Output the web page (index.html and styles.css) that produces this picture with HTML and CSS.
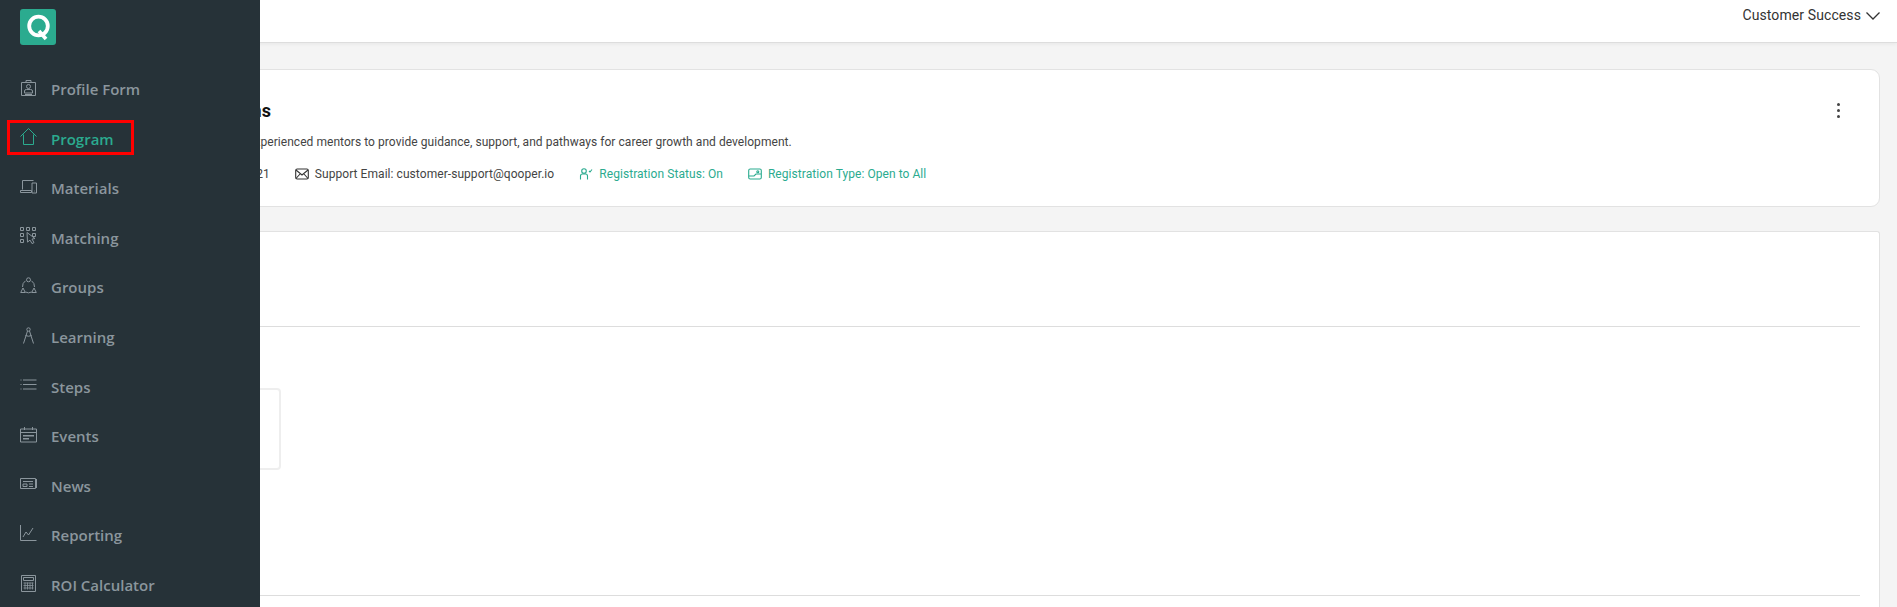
FILE: index.html
```html
<!DOCTYPE html>
<html lang="en">
<head>
<meta charset="utf-8">
<title>Program</title>
<link rel="stylesheet" href="styles.css">
</head>
<body>
<aside class="sidebar">
  <div class="logo"><svg viewBox="0 0 36 36" width="36" height="36"><circle cx="18.500" cy="17" r="9.300" fill="none" stroke="#fff" stroke-width="3.800"/><path d="M19 22l7 8" stroke="#fff" stroke-width="3.600" fill="none"/></svg></div>
  <nav class="nav">
    <a class="item"><svg class="ic" viewBox="0 0 17 17"><path d="M1.500 3.500h14v13h-14zM6 3.500V1.500h5v2"/><circle cx="8.500" cy="7.500" r="2"/><path d="M4.500 14v-2q0-1.500 2-1.500h4q2 0 2 1.500v2zM5 15.500h7"/></svg><span>Profile Form</span></a>
    <a class="item active"><svg class="ic" viewBox="0 0 17 17"><path d="M.5 8.500L8.500.5l8 8M3.500 6.500v10h10v-10"/></svg><span>Program</span><i class="mark"></i></a>
    <a class="item"><svg class="ic" viewBox="0 0 17 17"><path d="M2.500 11.500v-9h11M.5 12.500h11v2h-11zM12 5h4.500v10H12zM14 13h.6"/></svg><span>Materials</span></a>
    <a class="item"><svg class="ic" viewBox="0 0 17 17"><path d="M.5.5h3v3h-3zM6.500.5h3v3h-3zM12.500.5h3v3h-3zM.5 6.500h3v3h-3zM12.500 6.500h3v3h-3zM.5 12.500h3v3h-3z"/><path d="M7 5.500l8 6-3 .6 2 3.500-2 1-2-3.500-2.500 2z"/></svg><span>Matching</span></a>
    <a class="item"><svg class="ic" viewBox="0 0 17 17"><circle cx="8.500" cy="2.800" r="2"/><path d="M.7 15.500l2.300-4.500 2.300 4.500zM11.700 15.500l2.300-4.500 2.300 4.500zM5.500 3.800A7 7 0 0 0 2.500 10M11.500 3.800a7 7 0 0 1 3 6.200M5.500 15a6 6 0 0 0 6 0"/></svg><span>Groups</span></a>
    <a class="item"><svg class="ic" viewBox="0 0 17 17"><circle cx="8.500" cy="2.500" r="1.700"/><path d="M7.500 4L3.500 16.500M9.500 4l4 12.500M5.500 8.500q3 1.500 6 0"/></svg><span>Learning</span></a>
    <a class="item"><svg class="ic" viewBox="0 0 17 12"><path d="M3 1.500h13.500M3 6h13.500M3 10.500h13.500M.5 1.500h1M.5 6h1M.5 10.500h1"/></svg><span>Steps</span></a>
    <a class="item"><svg class="ic" viewBox="0 0 17 16"><path d="M.5 2.500h16v13H.5zM.5 6h16M4.500.5v3M12.500.5v3"/><path class="bar" d="M3 8.500h11v1.500H3zM3 11.500h6V13H3z"/></svg><span>Events</span></a>
    <a class="item"><svg class="ic" viewBox="0 0 17 11"><path d="M.5.5h15v10H.5zM16.500 1v9M3 3.500h10M3 6h4v2.500H3zM9 6h4M9 8.500h4"/></svg><span>News</span></a>
    <a class="item"><svg class="ic" viewBox="0 0 17 17"><path d="M.5 0v15.500h16M3 12l3-5 2.500 3L13 3"/></svg><span>Reporting</span></a>
    <a class="item"><svg class="ic" viewBox="0 0 17 17"><path d="M1.500.5h14v16h-14zM3.500 2.500h10v3h-10z"/><path class="grid" d="M3.500 8h10M3.500 10.500h10M3.500 13h10M5 7.500v7M7.500 7.500v7M10 7.500v7M12.500 7.500v7"/></svg><span>ROI Calculator</span></a>
  </nav>
</aside>
<div class="page">
  <header class="topbar">
    <span>Customer Success</span>
    <svg class="chev" viewBox="0 0 14 8"><path d="M.5.5L7 7l6.500-6.500"/></svg>
  </header>
  <main class="content">
    <section class="card">
      <div class="card-text">
        <h1>Mentoring Programs</h1>
        <p class="desc">Connects all mentees with experienced mentors to provide guidance, support, and pathways for career growth and development.</p>
        <div class="meta">
          <span class="meta-item">Cohort Start Date: 01/01/2021</span>
          <span class="meta-item"><svg class="mi" viewBox="0 0 14 12"><rect x=".7" y="1" width="12.600" height="10" rx="1.500"/><path d="M1 2l6 5 6-5M1 10.500l4-4.500M13 10.500L9 6"/></svg>Support Email: customer-support@qooper.io</span>
          <span class="meta-item green"><svg class="mi" viewBox="0 0 14 12"><circle cx="5" cy="3" r="2.300"/><path d="M1.500 11.500V8q0-2 2-2h3q2 0 2 2v3.500M10 3l1 1 2-2.500"/></svg>Registration Status: On</span>
          <span class="meta-item green"><svg class="mi" viewBox="0 0 14 12"><rect x=".7" y="1" width="12.600" height="10" rx="1.500"/><path d="M.7 8H6l2-2h5"/><circle cx="9.800" cy="3.800" r="1"/></svg>Registration Type: Open to All</span>
        </div>
      </div>
      <div class="dots"><i></i><i></i><i></i></div>
    </section>
    <section class="panel">
      <hr class="rule">
      <div class="tile"></div>
      <hr class="rule rule-low">
    </section>
  </main>
</div>
</body>
</html>
```
FILE: styles.css
```css
* { box-sizing: border-box; }
html, body { margin: 0; height: 100%; overflow: hidden; }
body { background: #f4f4f4; font-family: Roboto, "Liberation Sans", sans-serif; color: #333; }

.sidebar {
  position: fixed; left: 0; top: 0; bottom: 0; width: 260px;
  background: #263238; z-index: 2; overflow: hidden;
}
.logo {
  width: 36px; height: 36px; margin: 9px 0 0 20px;
  background: #2bab8f; border-radius: 3px; display: flex;
}
.nav { display: flex; flex-direction: column; margin-top: 19.3px; }
.item {
  position: relative; flex: 0 0 49.6px; display: flex; align-items: center; padding-left: 20px;
  font-family: "Open Sans", sans-serif; font-weight: 600; font-size: 15px; color: #8b969d;
}
.item span { margin-left: 14px; }
.ic { width: 17px; height: 17px; margin-bottom: 4px; fill: none; stroke: #8b969d; stroke-width: 1; flex: none; }
.ic .bar { fill: #8b969d; stroke: none; }
.ic .grid { stroke-width: .8; }
.active { color: #2bab8f; }
.active .ic { stroke: #2bab8f; }
.mark { position: absolute; left: 7px; top: 6px; width: 127px; height: 35.5px; border: 3px solid #f00; }

.page { display: flex; flex-direction: column; height: 100%; }
.topbar {
  flex: none; height: 43px; background: #fff; border-bottom: 1px solid #ddd;
  box-shadow: 0 1px 4px rgba(0,0,0,.06);
  display: flex; justify-content: flex-end; align-items: flex-start; gap: 5px;
  padding: 7px 17px 0 0; font-size: 14px; line-height: 16px; color: #333; letter-spacing: .1px;
}
.chev { width: 14px; height: 8px; margin-top: 5px; fill: none; stroke: #333; stroke-width: 1.300; }
.content { flex: 1; padding: 26px 17px 0 30px; display: flex; flex-direction: column; gap: 24px; min-height: 0; }
.card {
  flex: none; height: 138px; background: #fff; border: 1px solid #e2e2e2; border-radius: 9px;
  display: flex; justify-content: space-between; padding: 29px 39px 0 72px;
}
h1 { margin: 0; font-size: 18px; line-height: 24px; font-weight: 700; color: #111; letter-spacing: .06px; }
.desc { margin: 11px 0 0; font-size: 12px; line-height: 16px; color: #444; letter-spacing: .05px; }
.meta { display: flex; gap: 25px; margin: 16px 0 0 2.4px; font-size: 12px; line-height: 16px; color: #444; letter-spacing: .06px; }
.meta-item { display: flex; align-items: center; gap: 6px; }
.mi { width: 14px; height: 12px; fill: none; stroke: #333; stroke-width: 1.100; }
.green { color: #2bab8f; }
.green .mi { stroke: #2bab8f; }
.dots { display: flex; flex-direction: column; gap: 3px; margin-top: 4px; }
.dots i { width: 3px; height: 3px; border-radius: 50%; background: #444; }

.panel {
  flex: 1; background: #fff; border: 1px solid #e2e2e2; border-bottom: 0; border-radius: 3px 3px 0 0;
  padding: 94px 19px 0 20px; min-height: 0;
}
.rule { border: 0; border-top: 1px solid #ddd; margin: 0; }
.tile { width: 230px; height: 82px; margin-top: 61px; border: 2px solid #eee; border-radius: 4px; }
.rule-low { margin-top: 125px; }
```
